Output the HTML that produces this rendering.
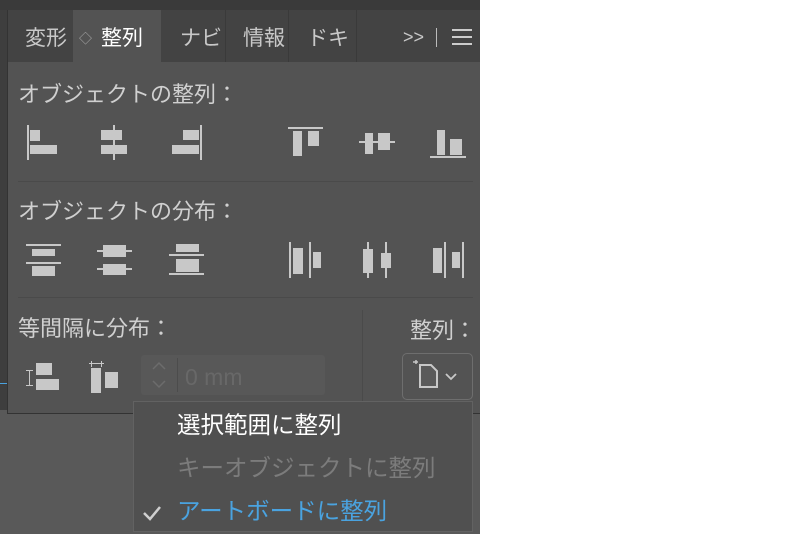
<!DOCTYPE html>
<html><head><meta charset="utf-8"><style>
*{margin:0;padding:0;box-sizing:border-box}
body{width:800px;height:534px;background:#fff;position:relative;overflow:hidden;font-family:"Liberation Sans","Noto Sans CJK JP",sans-serif}
#app{position:absolute;left:0;top:0;width:480px;height:534px;background:#595959}
.a{position:absolute}
.t{position:absolute;color:#d0d0d0;font-size:22px;white-space:nowrap;line-height:1.2}
</style></head><body>
<div id="app">
<div class="a" style="left:0;top:0;width:480px;height:10px;background:#3a3a3a"></div>
<div class="a" style="left:0;top:10px;width:7px;height:400px;background:#3e3e3e"></div>
<div class="a" style="left:7px;top:10px;width:473px;height:404px;background:#535353;border-left:1px solid #333;border-bottom:1px solid #333"></div>
<div class="a" style="left:8px;top:10px;width:472px;height:52px;background:#434343"></div>
<div class="a" style="left:73px;top:10px;width:88px;height:53px;background:#535353"></div>
<div class="a" style="left:225px;top:10px;width:1px;height:52px;background:#3a3a3a"></div>
<div class="a" style="left:288px;top:10px;width:1px;height:52px;background:#3a3a3a"></div>
<div class="a" style="left:356px;top:10px;width:1px;height:52px;background:#3a3a3a"></div>
<div class="t" style="left:25px;top:26px;font-size:21px;color:#c8c8c8">変形</div>
<div class="t" style="left:79px;top:31px;font-size:13px;color:#aaa">◇</div>
<div class="t" style="left:101px;top:26px;font-size:21px;color:#fff">整列</div>
<div class="t" style="left:180px;top:26px;font-size:21px;color:#c8c8c8">ナビ</div>
<div class="t" style="left:243px;top:26px;font-size:21px;color:#c8c8c8">情報</div>
<div class="t" style="left:307px;top:26px;font-size:21px;color:#c8c8c8">ドキ</div>
<div class="t" style="left:403px;top:27px;font-size:18px;color:#c8c8c8">&gt;&gt;</div>
<div class="a" style="left:436px;top:28px;width:1px;height:19px;background:#bbb"></div>
<div class="a" style="left:452px;top:29px;width:20px;height:2px;background:#ccc"></div>
<div class="a" style="left:452px;top:36px;width:20px;height:2px;background:#ccc"></div>
<div class="a" style="left:452px;top:43px;width:20px;height:2px;background:#ccc"></div>

<div class="t" style="left:18px;top:82px">オブジェクトの整列：</div>
<div class="t" style="left:18px;top:199px">オブジェクトの分布：</div>
<div class="t" style="left:18px;top:316px">等間隔に分布：</div>
<div class="t" style="left:410px;top:318px">整列：</div>
<div class="a" style="left:18px;top:181px;width:455px;height:1px;background:#4a4a4a"></div>
<div class="a" style="left:18px;top:297px;width:455px;height:1px;background:#4a4a4a"></div>
<div class="a" style="left:362px;top:310px;width:1px;height:104px;background:#4a4a4a"></div>

<svg class="a" style="left:0;top:0" width="480" height="534" fill="#c8c8c8">
<rect x="27" y="125" width="2" height="35"/><rect x="30" y="130" width="10" height="11"/><rect x="30" y="145" width="27" height="9"/>
<rect x="113" y="125" width="2" height="35"/><rect x="101" y="130" width="21" height="10"/><rect x="101" y="145" width="26" height="9"/>
<rect x="200" y="125" width="2" height="35"/><rect x="183" y="130" width="16" height="10"/><rect x="172" y="145" width="27" height="9"/>
<rect x="288" y="127" width="35" height="2"/><rect x="293" y="131" width="9" height="25"/><rect x="308" y="131" width="11" height="15"/>
<rect x="359" y="141" width="36" height="2"/><rect x="365" y="133" width="8" height="21"/><rect x="378" y="133" width="12" height="17"/>
<rect x="430" y="156" width="36" height="2"/><rect x="437" y="130" width="8" height="25"/><rect x="450" y="139" width="12" height="16"/>

<rect x="26" y="244" width="35" height="2"/><rect x="26" y="262" width="35" height="2"/><rect x="32" y="249" width="23" height="7"/><rect x="32" y="266" width="23" height="10"/>
<rect x="97" y="250" width="35" height="2"/><rect x="97" y="268" width="35" height="2"/><rect x="103" y="245" width="23" height="12"/><rect x="103" y="264" width="23" height="11"/>
<rect x="169" y="254" width="35" height="2"/><rect x="169" y="273" width="35" height="2"/><rect x="176" y="244" width="23" height="8"/><rect x="176" y="259" width="23" height="13"/>
<rect x="289" y="242" width="2" height="36"/><rect x="309" y="242" width="2" height="36"/><rect x="293" y="248" width="10" height="26"/><rect x="313" y="252" width="8" height="16"/>
<rect x="367" y="242" width="2" height="36"/><rect x="385" y="242" width="2" height="36"/><rect x="363" y="249" width="10" height="24"/><rect x="381" y="253" width="10" height="15"/>
<rect x="444" y="242" width="2" height="36"/><rect x="462" y="242" width="2" height="36"/><rect x="433" y="248" width="9" height="25"/><rect x="452" y="252" width="8" height="16"/>

<rect x="29" y="370" width="1" height="16"/><rect x="26" y="370" width="7" height="1"/><rect x="26" y="385" width="7" height="1"/>
<rect x="36" y="363" width="16" height="12"/><rect x="36" y="379" width="23" height="11"/>
<rect x="91" y="361" width="1" height="6"/><rect x="101" y="361" width="1" height="6"/><rect x="89" y="363" width="15" height="1"/>
<rect x="91" y="368" width="10" height="25"/><rect x="105" y="372" width="13" height="16"/>
</svg>
<div class="a" style="left:141px;top:355px;width:184px;height:40px;background:#585858;border-radius:3px"></div>
<div class="a" style="left:177px;top:358px;width:1px;height:34px;background:#4c4c4c"></div>
<svg class="a" style="left:148px;top:358px" width="24" height="34" fill="none" stroke="#6c6c6c" stroke-width="1.5"><path d="M5 11L11 5L17 11M5 23L11 29L17 23"/></svg>
<div class="t" style="left:185px;top:364px;font-size:23px;color:#686868">0 mm</div>
<div class="a" style="left:402px;top:353px;width:71px;height:47px;border:1.5px solid #6e6e6e;border-radius:5px"></div>
<svg class="a" style="left:402px;top:353px" width="71" height="47" fill="none" stroke="#c8c8c8" stroke-width="2">
<path d="M18 34V12H29L35 18V34Z" fill="#5a5a5a"/><path d="M11 9H16M14 7V11" stroke-width="1.5"/><path d="M44 21L49 26L54 21" stroke-width="1.8"/>
</svg>

<div class="a" style="left:133px;top:401px;width:340px;height:131px;background:#505050;border:1.5px solid #626262"></div>
<div class="t" style="left:177px;top:411px;font-size:23.5px;color:#fff">選択範囲に整列</div>
<div class="t" style="left:177px;top:454px;font-size:23.5px;color:#7c7c7c">キーオブジェクトに整列</div>
<div class="t" style="left:177px;top:497px;font-size:23.5px;color:#4aa3e0">アートボードに整列</div>
<svg class="a" style="left:140px;top:500px" width="25" height="25" fill="none" stroke="#cfcfcf" stroke-width="2.5"><path d="M4 13L10 19L20 7"/></svg>
<div class="a" style="left:0;top:383px;width:7px;height:1px;background:#4aa3e0"></div>
</div>
</body></html>
